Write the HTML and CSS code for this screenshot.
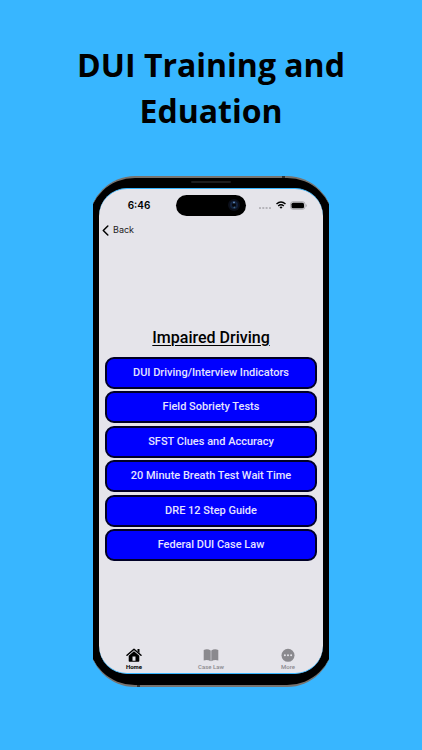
FILE: index.html
```html
<!DOCTYPE html>
<html lang="en">
<head>
<meta charset="utf-8">
<meta name="viewport" content="width=device-width, initial-scale=1">
<title>DUI Training and Eduation</title>
<link rel="stylesheet" href="styles.css">
</head>
<body>
<main class="poster">
  <h1 class="headline">DUI Training and Eduation</h1>
  <section class="phone">
    <div class="bezel">
      <span class="speaker"></span>
      <span class="antenna antenna-top"></span>
      <span class="antenna antenna-bottom"></span>
      <div class="screen">
        <header class="status">
          <span class="time">6:46</span>
          <span class="island">
            <svg width="12" height="12" viewBox="0 0 12 12" aria-hidden="true">
              <circle cx="6" cy="6" r="6" fill="#0b0f1a"/>
              <circle cx="6" cy="6" r="4" fill="#14233f"/>
              <circle cx="6" cy="6" r="2" fill="#05070c"/>
              <circle cx="6" cy="3.6" r="1" fill="#5b83b5"/>
              <circle cx="6.4" cy="8.4" r=".9" fill="#3e6480"/>
            </svg>
          </span>
          <span class="signals">
            <svg width="13" height="9" viewBox="0 0 13 9" aria-hidden="true">
              <g fill="#b4b3b9"><rect x="0" y="6" width="2" height="2" rx=".6"/><rect x="3.3" y="6" width="2" height="2" rx=".6"/><rect x="6.6" y="6" width="2" height="2" rx=".6"/><rect x="10" y="6" width="2" height="2" rx=".6"/></g>
            </svg>
            <svg width="10" height="8" viewBox="0 0 10 8" aria-hidden="true">
              <g fill="none" stroke="#000" stroke-width="1.5"><path d="M.5 3Q5-1 9.500 3"/><path d="M2.200 5Q5 2.600 7.800 5"/></g>
              <path d="M3.500 6.200Q5 5 6.500 6.200L5 7.800Z"/>
            </svg>
            <svg width="17" height="9" viewBox="0 0 17 9" aria-hidden="true">
              <rect x=".5" y=".7" width="14.500" height="7.600" rx="2.500" fill="#d5d4da" stroke="#a4a3a8" stroke-width=".8"/>
              <rect x="1.500" y="1.700" width="12.500" height="5.600" rx="1.600"/>
              <path d="M15.800 3v3q1-.5 1-1.500t-1-1.500Z" fill="#a4a3a8"/>
            </svg>
          </span>
        </header>
        <nav class="topbar">
          <button class="back" type="button">
            <svg width="7" height="11" viewBox="0 0 7 11" aria-hidden="true"><path d="M5.800 1 1.300 5.500l4.500 4.500" fill="none" stroke="#000" stroke-width="1.500" stroke-linecap="round" stroke-linejoin="round"/></svg>
            Back
          </button>
        </nav>
        <div class="content">
          <h2 class="title">Impaired Driving</h2>
          <div class="menu">
            <button type="button">DUI Driving/Interview Indicators</button>
            <button type="button">Field Sobriety Tests</button>
            <button type="button">SFST Clues and Accuracy</button>
            <button type="button">20 Minute Breath Test Wait Time</button>
            <button type="button">DRE 12 Step Guide</button>
            <button type="button">Federal DUI Case Law</button>
          </div>
        </div>
        <nav class="tabs">
          <a class="tab active" href="#home">
            <svg width="16" height="14" viewBox="0 0 16 14" aria-hidden="true">
              <path d="M1 7.300 8 1.200l7 6.100" fill="none" stroke="currentColor" stroke-width="1.500" stroke-linecap="round" stroke-linejoin="round"/>
              <path d="M11.500 1h2v4l-2-1.700Z" fill="currentColor"/>
              <path fill="currentColor" fill-rule="evenodd" d="M8 3.200l5.300 4.600V13q0 .8-.8.8h-9q-.8 0-.8-.8V7.800ZM6.500 8.500v4.200h3V8.500Z"/>
            </svg>
            Home
          </a>
          <a class="tab" href="#case-law">
            <svg width="16" height="14" viewBox="0 0 16 14" aria-hidden="true">
              <path d="M7.700 2.500Q4.500.2.700 1.900v10.500q3.800-1.100 7 .8Z" fill="currentColor"/>
              <path d="M8.300 2.500q3.200-2.300 7-.6v10.500q-3.800-1.100-7 .8Z" fill="currentColor"/>
            </svg>
            Case Law
          </a>
          <a class="tab" href="#more">
            <svg width="16" height="14" viewBox="0 0 16 14" aria-hidden="true">
              <circle cx="8" cy="7.300" r="6.500" fill="currentColor"/>
              <g fill="#e5e4ea"><circle cx="4.900" cy="7.300" r="1"/><circle cx="8" cy="7.300" r="1"/><circle cx="11.100" cy="7.300" r="1"/></g>
            </svg>
            More
          </a>
        </nav>
      </div>
    </div>
  </section>
</main>
</body>
</html>
```
FILE: styles.css
```css
* {
  box-sizing: border-box;
}

body {
  margin: 0;
  background: #38b6ff;
  color: #000;
  font-family: Inter, "Liberation Sans", sans-serif;
}

.poster {
  display: flex;
  flex-direction: column;
  align-items: center;
  min-height: 100vh;
  padding: 42px 56px;
}

.headline {
  max-width: 300px;
  margin: 0 0 42px;
  font: 700 32px/46px "Open Sans", "Noto Sans", sans-serif;
  text-align: center;
}

.phone {
  display: flex;
  width: 56%;
  min-width: 236px;
  max-width: 360px;
  aspect-ratio: 236 / 511;
  overflow: hidden;
}

.bezel {
  position: relative;
  display: flex;
  flex: 1;
  margin: 0 -4px;
  padding: 10px;
  padding-bottom: 11px;
  border: 2px solid #77736f;
  border-width: 2px 0;
  border-radius: 46px;
  background: #000;
}

.speaker {
  position: absolute;
  top: 3px;
  left: 50%;
  width: 40px;
  height: 2px;
  margin-left: -20px;
  border-radius: 1px;
  background: #1d1d1f;
}

.antenna {
  position: absolute;
  width: 3px;
  height: 2px;
  background: #35322f;
}

.antenna-top {
  top: -2px;
  right: 48px;
}

.antenna-bottom {
  bottom: -2px;
  left: 48px;
}

.screen {
  display: flex;
  flex: 1;
  flex-direction: column;
  border: 1px solid #38b6ff;
  border-width: 1px 0;
  border-radius: 28px;
  background: #e5e4ea;
}

.status {
  display: grid;
  grid-template-columns: 1fr 70px 1fr;
  align-items: center;
  height: 32px;
}

.time {
  padding-left: 3px;
  font-size: 10px;
  font-weight: 600;
  text-align: center;
}

.island {
  display: flex;
  align-items: center;
  justify-content: flex-end;
  height: 21px;
  padding-right: 6px;
  border-radius: 11px;
  background: #000;
}

.signals {
  display: flex;
  gap: 4px;
  align-items: center;
  justify-content: flex-end;
  padding-right: 16px;
}

.signals svg {
  flex: none;
}

.topbar {
  padding-left: 3px;
}

.back {
  display: flex;
  gap: 4px;
  align-items: center;
  height: 18px;
  padding: 0;
  border: 0;
  background: none;
  color: #222;
  font: 400 9px/18px Inter, sans-serif;
}

.content {
  display: flex;
  flex: 1;
  flex-direction: column;
  justify-content: center;
  padding: 1px 6px 0;
}

.title {
  margin: 0 0 8px;
  font: 500 16px/22px Roboto, "Liberation Sans", sans-serif;
  text-align: center;
  text-decoration: underline;
  text-decoration-thickness: 1px;
  text-underline-offset: 2px;
}

.menu {
  display: grid;
  grid-auto-rows: 32px;
  align-content: space-between;
  height: 204px;
}

.menu button {
  padding: 0;
  border: 2px solid #000028;
  border-radius: 9px;
  background: #00f;
  color: #e5e4ff;
  font: 500 11px/16px Roboto, "Liberation Sans", sans-serif;
}

.tabs {
  display: flex;
  justify-content: space-between;
  padding: 0 27px;
}

.tab {
  display: flex;
  flex-direction: column;
  gap: 1px;
  align-items: center;
  height: 25px;
  color: #8a898e;
  font: 500 6px/8px Roboto, "Liberation Sans", sans-serif;
  text-decoration: none;
}

.tab.active {
  color: #000;
  font-weight: 700;
}
```
